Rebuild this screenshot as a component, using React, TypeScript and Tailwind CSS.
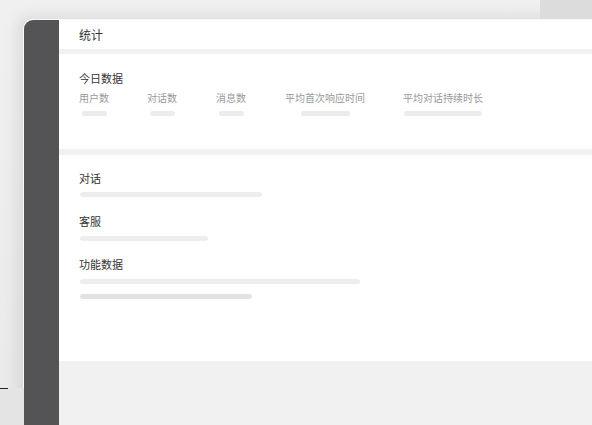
import React from 'react';

type Metric = { label: string; bar: number; col: string };

// column widths follow the spacing of the stats row
const metrics: Metric[] = [
  { label: '用户数', bar: 25, col: 'w-[68px]' },
  { label: '对话数', bar: 25, col: 'w-[69px]' },
  { label: '消息数', bar: 25, col: 'w-[69px]' },
  { label: '平均首次响应时间', bar: 49, col: 'w-[118px]' },
  { label: '平均对话持续时长', bar: 78, col: 'w-auto' },
];

const font = { fontFamily: '"Noto Sans CJK SC", "Noto Sans", sans-serif' };

// skeleton placeholder line
const Bar: React.FC<{ width: number; className?: string }> = ({ width, className }) => (
  <div className={`h-[5px] rounded-full ${className ?? 'bg-[#ededed]'}`} style={{ width }} />
);

const App: React.FC = () => {
  return (
    <div
      className="relative w-[592px] h-[425px] overflow-hidden bg-gradient-to-b from-[#f0f0f0] to-[#e9e9e9]"
      style={font}
    >
      <div className="absolute right-0 top-0 w-[52px] h-[19px] bg-[#dcdcdc]" />
      <div className="absolute left-0 top-[388px] w-[24px] h-[37px] bg-[#e4e4e4]" />
      <div className="absolute left-0 top-[388px] w-[8px] h-px bg-[#222]" />

      <div className="pl-[23px] pt-[19px] h-full">
        <div className="flex h-full rounded-tl-[10px] overflow-hidden border-l border-t border-[#f8f8f8] shadow-[-6px_-4px_14px_rgba(0,0,0,0.08)]">
          <aside className="w-[35px] shrink-0 bg-[#545457]" />

          <main className="flex-1 flex flex-col bg-[#f1f1f1]">
            <header className="h-[29px] shrink-0 bg-white flex items-center pl-[20px]">
              <h1 className="text-[12px] leading-none text-[#333]">统计</h1>
            </header>

            <section className="mt-[5px] h-[95px] shrink-0 bg-white pl-[20px] pt-[16px]">
              <h2 className="text-[11px] leading-[16px] text-[#333]">今日数据</h2>
              <div className="flex mt-[5px]">
                {metrics.map((m) => (
                  <div key={m.label} className={`${m.col} shrink-0 flex items-start`}>
                    <div className="flex flex-col items-center">
                      <span className="text-[10px] leading-[14px] text-[#999]">{m.label}</span>
                      <Bar width={m.bar} className="mt-[6px] bg-[#ececec]" />
                    </div>
                  </div>
                ))}
              </div>
            </section>

            <section className="mt-[6px] h-[206px] shrink-0 bg-white pl-[21px] pt-[15px]">
              <h2 className="text-[11px] leading-[16px] text-[#333] -ml-[1px]">对话</h2>
              <div className="mt-[6px]">
                <Bar width={182} />
              </div>

              <h2 className="mt-[16px] text-[11px] leading-[16px] text-[#333] -ml-[1px]">客服</h2>
              <div className="mt-[7px]">
                <Bar width={128} />
              </div>

              <h2 className="mt-[15px] text-[11px] leading-[16px] text-[#333] -ml-[1px]">功能数据</h2>
              <div className="mt-[7px]">
                <Bar width={280} />
              </div>
              <div className="mt-[10px]">
                <Bar width={172} className="bg-[#e3e3e3]" />
              </div>
            </section>

            <div className="flex-1" />
          </main>
        </div>
      </div>
    </div>
  );
};

export default App;
